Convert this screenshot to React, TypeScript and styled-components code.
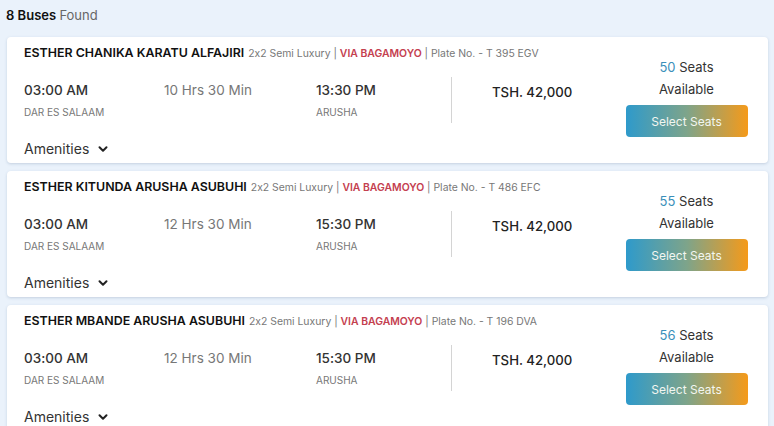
import React from "react";
import styled, { createGlobalStyle } from "styled-components";

const Global = createGlobalStyle`
  html, body { margin: 0; padding: 0; background: #eaf2fb; }
  body { font-family: "Inter", "Noto Sans", sans-serif; color: #222; font-feature-settings: "calt" 0; }
  * { box-sizing: border-box; }
`;

const Page = styled.div`
  padding: 6px 6px 0 7px;
  display: flex;
  flex-direction: column;
  height: 426px;
  overflow: hidden;
`;

const Header = styled.div`
  font-size: 13px;
  line-height: 18px;
  margin-left: -1px;
  margin-bottom: 13px;
  color: #111;
  font-weight: 600;
  span { font-weight: 400; color: #666; }
`;

const List = styled.div`
  display: flex;
  flex-direction: column;
  gap: 8px;
`;

const Card = styled.div`
  background: #fff;
  border-radius: 4px;
  box-shadow: 0 1px 3px rgba(60, 90, 130, 0.22);
  height: 126px;
  flex-shrink: 0;
  display: grid;
  grid-template-columns: 1fr 142px;
`;

const Main = styled.div`
  padding: 8px 0 0 17px;
  display: flex;
  flex-direction: column;
`;

const Title = styled.div`
  line-height: 16px;
  white-space: nowrap;
  font-size: 10.4px;
  color: #777;
  b { font-size: 12.4px; font-weight: 600; color: #111; margin-right: 4px; }
  em { font-style: normal; color: #c4404f; font-weight: 600; }
`;

const Info = styled.div`
  margin-top: 15px;
  display: grid;
  grid-template-columns: 140px 152px 135px 1px 1fr;
  height: 46px;
`;

const Stop = styled.div`
  padding-top: 3px;
  display: flex;
  flex-direction: column;
`;

const Time = styled.div<{ $muted?: boolean }>`
  font-size: 13.5px;
  line-height: 20px;
  font-weight: ${(p) => (p.$muted ? 400 : 500)};
  color: ${(p) => (p.$muted ? "#777" : "#333")};
`;

const City = styled.div`
  margin-top: 5px;
  font-size: 10px;
  line-height: 14px;
  color: #777;
`;

const Divider = styled.div`
  background: #d4d4d4;
  width: 1px;
  height: 46px;
`;

const Price = styled.div`
  padding-left: 40px;
  padding-top: 5px;
  font-size: 13.2px;
  line-height: 20px;
  font-weight: 500;
  color: #222;
`;

const Amenities = styled.div`
  margin-top: 17px;
  display: flex;
  align-items: center;
  gap: 9px;
  font-size: 14px;
  line-height: 18px;
  color: #333;
`;

const Side = styled.div`
  padding: 0 21px 7px 0;
  display: flex;
  flex-direction: column;
  align-items: center;
  justify-content: center;
`;

const Seats = styled.div`
  font-size: 13px;
  line-height: 22px;
  color: #333;
  text-align: center;
  span { color: #3b8fba; }
`;

const Button = styled.button`
  margin-top: 5px;
  width: 122px;
  height: 32px;
  border: none;
  border-radius: 4px;
  background: linear-gradient(90deg, #2e9acb 0%, #7ea48a 50%, #f59a1a 100%);
  color: #f3f6f0;
  font-family: inherit;
  font-size: 12px;
  cursor: pointer;
`;

const Chevron = () => (
  <svg width="10" height="10" viewBox="0 0 10 10">
    <path d="M1.5 3.2 L5 6.7 L8.5 3.2" fill="none" stroke="#222" strokeWidth="2" strokeLinecap="round" strokeLinejoin="round" />
  </svg>
);

const buses = [
  { name: "ESTHER CHANIKA KARATU ALFAJIRI", plate: "T 395 EGV", dur: "10 Hrs 30 Min", arr: "13:30 PM", seats: 50 },
  { name: "ESTHER KITUNDA ARUSHA ASUBUHI", plate: "T 486 EFC", dur: "12 Hrs 30 Min", arr: "15:30 PM", seats: 55 },
  { name: "ESTHER MBANDE ARUSHA ASUBUHI", plate: "T 196 DVA", dur: "12 Hrs 30 Min", arr: "15:30 PM", seats: 56 },
];

export default function App() {
  return (
    <>
      <Global />
      <Page>
        <Header>
          8 Buses <span>Found</span>
        </Header>
        <List>
          {buses.map((b) => (
            <Card key={b.plate}>
              <Main>
                <Title>
                  <b>{b.name}</b>2x2 Semi Luxury | <em>VIA BAGAMOYO</em> | Plate No. - {b.plate}
                </Title>
                <Info>
                  <Stop>
                    <Time>03:00 AM</Time>
                    <City>DAR ES SALAAM</City>
                  </Stop>
                  <Stop>
                    <Time $muted>{b.dur}</Time>
                  </Stop>
                  <Stop>
                    <Time>{b.arr}</Time>
                    <City>ARUSHA</City>
                  </Stop>
                  <Divider />
                  <Price>TSH. 42,000</Price>
                </Info>
                <Amenities>
                  Amenities <Chevron />
                </Amenities>
              </Main>
              <Side>
                <Seats>
                  <span>{b.seats}</span> Seats
                  <br />
                  Available
                </Seats>
                <Button>Select Seats</Button>
              </Side>
            </Card>
          ))}
        </List>
      </Page>
    </>
  );
}
